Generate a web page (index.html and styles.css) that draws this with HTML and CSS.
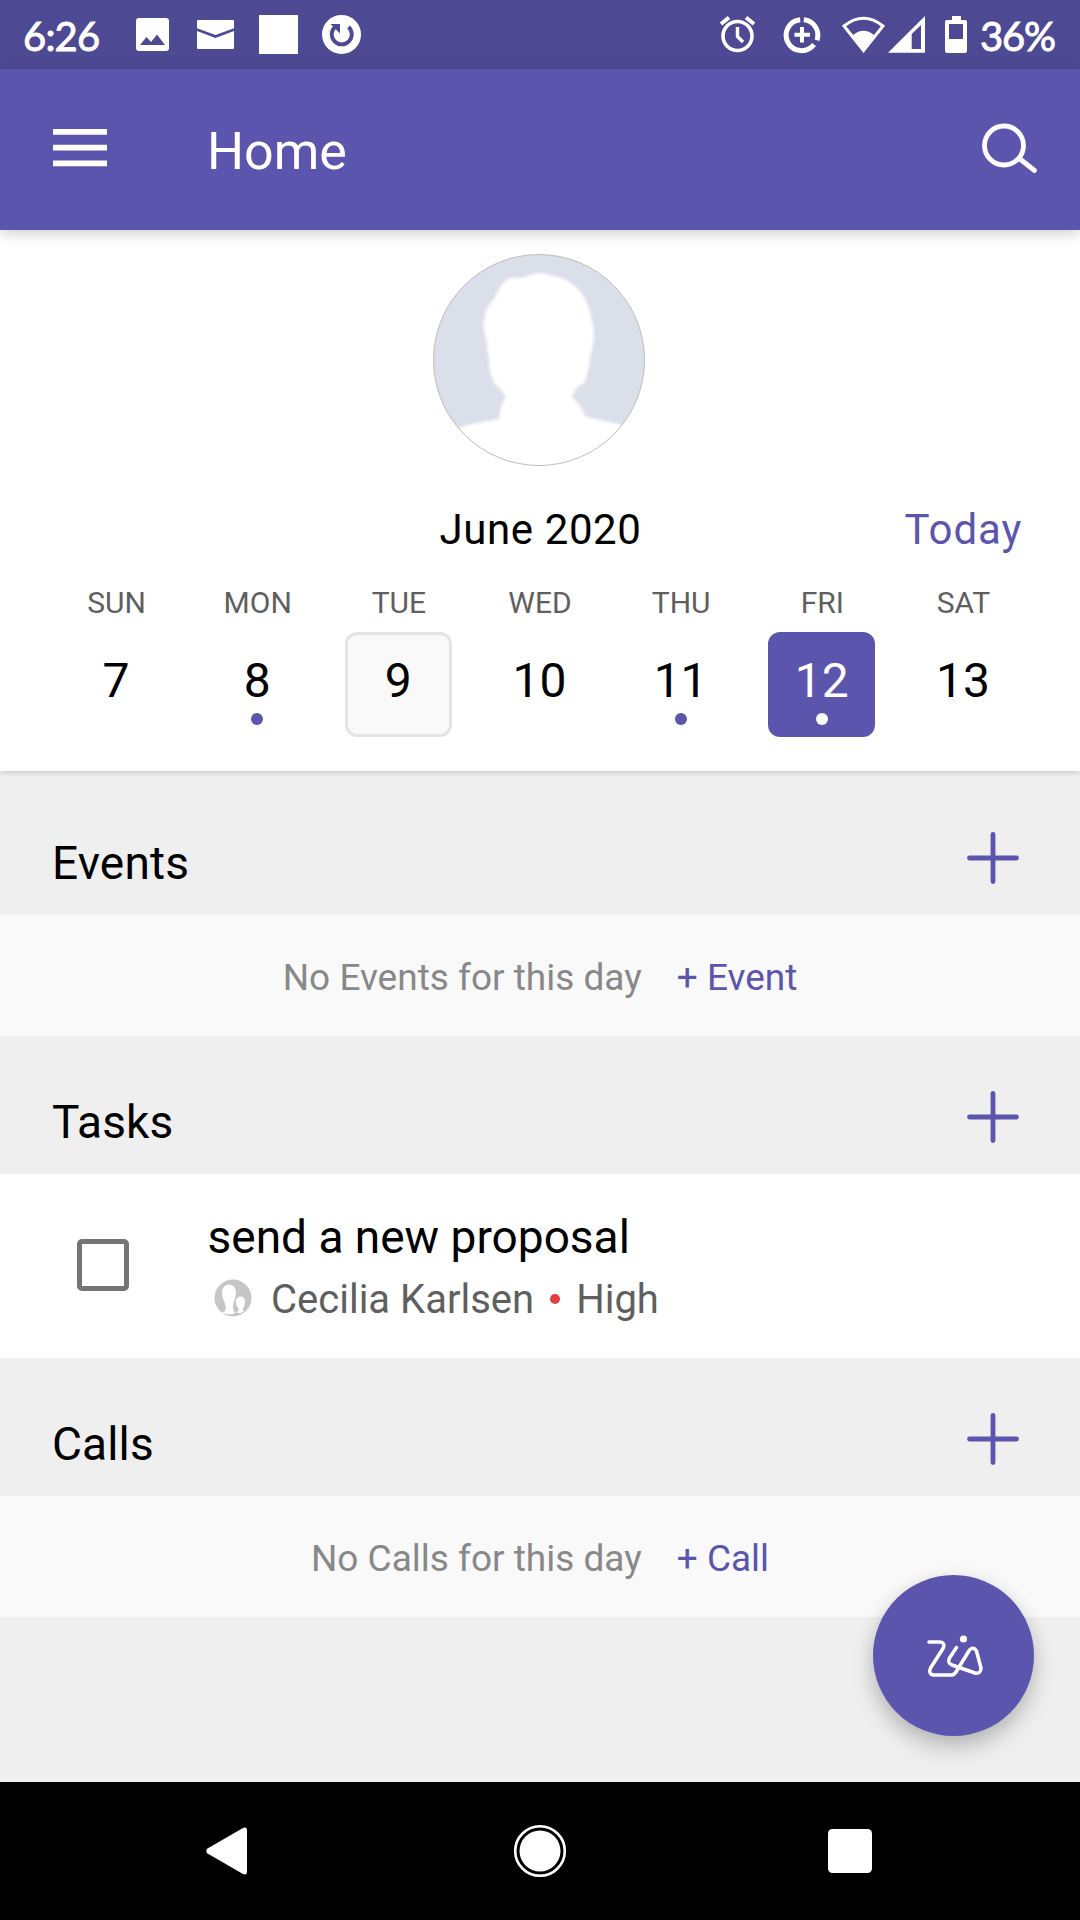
FILE: index.html
```html
<!DOCTYPE html>
<html lang="en">
<head>
  <meta charset="UTF-8">
  <title>Home</title>
  <meta name="viewport" content="width=device-width, initial-scale=1">
  <link rel="stylesheet" href="styles.css">
</head>
<body>
<div class="status-bar">
  <span class="clock">6:26</span>
  <svg class="status-left" width="226" height="40" viewBox="135 14 226 40" fill="#fff">
    <path fill-rule="evenodd" d="M139 18h27q3 0 3 3v27q0 3-3 3h-27q-3 0-3-3V21q0-3 3-3zM140 45h25l-8-10.500-6 7.500-4.500-5z"/>
    <path d="M198 20h35q1 0 1 1v7.300l-18.500 6.700L197 28.300V21q0-1 1-1zM197 31l18.500 7L234 31v17q0 1-1 1h-35q-1 0-1-1z"/>
    <path d="M259 15h39v39h-39z"/>
    <circle cx="341.500" cy="34.500" r="19.500"/>
    <path d="M348.500 27a10 10 0 1 1-13.500 0" fill="none" stroke="#4e4993" stroke-width="3.800"/>
    <path d="M330.500 24h9.500v9.500z" fill="#4e4993"/>
  </svg>
  <svg class="status-right" width="248" height="40" viewBox="719 14 248 40" fill="none" stroke="#fff">
    <circle cx="737.500" cy="36" r="14.500" stroke-width="3.600"/>
    <path d="M737.500 27v9.500l5.500 5.500" stroke-width="3.400"/>
    <path d="M721 24l8-6.500M754 24l-8-6.500" stroke-width="4"/>
    <path d="M803.800 19.700a15.500 15.500 0 0 1 13.200 20.500M814 44.500a15.500 15.500 0 1 1-13.800-24.800" stroke-width="5"/>
    <path d="M802 27v15.500M794.500 34.800H810" stroke-width="4"/>
    <path d="M844 26q19.500-15.500 39 0l-19.500 24.500z" stroke-width="3"/>
    <path d="M853 35q10.500-8.500 21 0l-10.500 16z" fill="#fff" stroke="none"/>
    <path d="M925 16v36.700h-37z" fill="#fff" stroke="none"/>
    <path d="M921 25v24h-9.300V34z" fill="#4e4993" stroke="none"/>
    <path fill-rule="evenodd" d="M952 16h9v4h4q2 0 2 2v29q0 2-2 2h-18q-2 0-2-2V22q0-2 2-2h5zM949 24v15h14V24z" fill="#fff" stroke="none"/>
  </svg>
  <span class="battery">36%</span>
</div>

<div class="app-bar">
  <svg class="menu-icon" width="54" height="38" viewBox="0 0 54 38" fill="#fff">
    <path d="M0 0h54v5.700H0zM0 15.800h54v5.700H0zM0 31.600h54v5.700H0z"/>
  </svg>
  <h1>Home</h1>
  <svg class="search-icon" width="56" height="52" viewBox="0 0 56 52" fill="none" stroke="#fff" stroke-width="4.800" stroke-linecap="round">
    <circle cx="22" cy="23.500" r="19.500"/>
    <path d="M38 37l14.500 11.500"/>
  </svg>
</div>

<div class="calendar">
  <svg class="avatar" width="212" height="212" viewBox="0 0 212 212">
    <defs>
      <clipPath id="round"><circle cx="106" cy="106" r="105.500"/></clipPath>
      <filter id="soft"><feGaussianBlur stdDeviation="1.500"/></filter>
    </defs>
    <circle cx="106" cy="106" r="105.500" fill="#dbdfe9"/>
    <g clip-path="url(#round)">
      <path filter="url(#soft)" fill="#fff" d="M20 220V177Q32 171 42 169.500L66 165Q67 152 72.500 143Q69 136 62 130Q56 120 56 105Q54 96 53 84Q49 72 51 66Q53 52 61 45Q68 28 77 24Q86 25 94 22Q106 16 119 22Q130 23 138 29Q150 37 155 52Q160 66 161 82Q160 94 157 105Q156 117 151 129Q143 131 139 143Q148 151 153 163L176 168L190 171L212 190V220Z"/>
    </g>
    <circle cx="106" cy="106" r="105.500" fill="none" stroke="#bdbdbd"/>
  </svg>
  <div class="month-row">
    <span class="month">June 2020</span>
    <a class="today">Today</a>
  </div>
  <div class="week">
    <div class="day"><span class="name">SUN</span><span class="num">7</span></div>
    <div class="day"><span class="name">MON</span><span class="num dot">8</span></div>
    <div class="day"><span class="name">TUE</span><span class="num current">9</span></div>
    <div class="day"><span class="name">WED</span><span class="num">10</span></div>
    <div class="day"><span class="name">THU</span><span class="num dot">11</span></div>
    <div class="day"><span class="name">FRI</span><span class="num dot selected">12</span></div>
    <div class="day"><span class="name">SAT</span><span class="num">13</span></div>
  </div>
</div>

<div class="section-head first">
  <h2>Events</h2>
  <svg class="plus" width="54" height="54" viewBox="0 0 54 54"><path d="M27 3.500v47M3.500 27h47"/></svg>
</div>
<div class="empty"><span>No Events for this day</span><a>+ Event</a></div>

<div class="section-head">
  <h2>Tasks</h2>
  <svg class="plus" width="54" height="54" viewBox="0 0 54 54"><path d="M27 3.500v47M3.500 27h47"/></svg>
</div>
<div class="task">
  <span class="checkbox"></span>
  <div class="task-body">
    <div class="task-title">send a new proposal</div>
    <div class="task-meta">
      <svg class="owner-icon" width="38" height="38" viewBox="0 0 38 38">
        <circle cx="19" cy="19" r="18.500" fill="#c6c6c6"/>
        <path fill="#fff" d="M8 33.500c3-1 4.500-2.500 3.500-6.500-.5-4-3.500-8-3.500-13 0-5.500 3-8.500 7-8.500s7 3 7 8.500c0 5-2.500 9-3 13-.3 3.500 1 6 2.500 7-4 2-9.500 1.500-13.500-.5z"/>
        <path fill="#fff" d="M22.500 33.500c1.500-.8 2.500-1.800 2-4-1.500-2-2.500-4-2.500-6.500 0-3.500 2-5.500 4.500-5.500s4.500 2 4.500 5.500c0 2.500-1 4.500-2 6.500-.3 1.500 0 2.500 1 3-2 1.500-5 2-7.500 1z"/>
      </svg>
      <span class="owner">Cecilia Karlsen</span>
      <i class="priority-dot"></i>
      <span>High</span>
    </div>
  </div>
</div>

<div class="section-head">
  <h2>Calls</h2>
  <svg class="plus" width="54" height="54" viewBox="0 0 54 54"><path d="M27 3.500v47M3.500 27h47"/></svg>
</div>
<div class="empty"><span>No Calls for this day</span><a>+ Call</a></div>

<div class="fab">
  <svg width="60" height="46" viewBox="0 0 60 46" fill="none" stroke="#fff" stroke-width="3.500" stroke-linecap="round" stroke-linejoin="round">
    <path d="M4 9h11q6 1 3 6.500L5.500 35q-2.500 6 3 7H27q2.500-.5 4-3L44.500 17q4-4 7 1l4.500 17q0 6-6 5L27 32q-5-2-2.500-7L31.500 14.500"/>
    <circle cx="38.500" cy="6" r="3.600" fill="#fff" stroke="none"/>
  </svg>
</div>

<div class="nav-bar">
  <svg width="42" height="48" viewBox="0 0 42 48" fill="#fff"><path d="M1.500 21.500L37 1q4-1.500 4 2.500v41q0 4-4 2.500L1.500 26.500q-2.500-2.500 0-5z"/></svg>
  <svg class="nav-home" width="54" height="54" viewBox="0 0 54 54"><circle cx="27" cy="27" r="24.800" fill="none" stroke="#fff" stroke-width="2.600"/><circle cx="27" cy="27" r="20.500" fill="#fff"/></svg>
  <svg width="44" height="44" viewBox="0 0 44 44"><rect width="44" height="44" rx="4.500" fill="#fff"/></svg>
</div>
</body>
</html>
```
FILE: styles.css
```css
* { box-sizing: border-box; }
body { margin: 0; width: 1080px; height: 1920px; overflow: hidden; display: flex; flex-direction: column; position: relative; background: #efefef; color: #000; font-family: Roboto, sans-serif; }
body > div { flex-shrink: 0; }
svg { display: block; flex-shrink: 0; }
h1, h2 { margin: 0; font-weight: 400; }

.status-bar { height: 69px; background: #4e4993; color: #fff; display: flex; align-items: flex-start; padding: 0 23px; font-family: Lato, sans-serif; font-size: 40px; line-height: 73px; -webkit-text-stroke: 0.9px #fff; }
.status-left, .status-right { margin-top: 14px; }
.clock { width: 112px; letter-spacing: -0.8px; }
.status-right { margin-left: 358px; }
.battery { margin-left: 13px; letter-spacing: -1.2px; white-space: nowrap; }

.app-bar { height: 161px; background: #5c55ae; color: #fff; display: flex; align-items: center; padding: 0 42px 0 53px; box-shadow: 0 3px 14px rgba(0, 0, 0, 0.2); z-index: 1; }
.menu-icon { margin-top: -3px; }
.app-bar h1 { font-size: 52px; line-height: 80px; margin: 5px 0 0 100px; }
.search-icon { margin: -4px 0 0 auto; }

.calendar { height: 541px; background: #fff; padding: 24px 46.5px 0 45.5px; box-shadow: 0 1px 6px rgba(0, 0, 0, 0.2); }
.avatar { margin-left: 387.5px; }
.month-row { display: grid; grid-template-columns: 1fr auto 1fr; margin-top: 34px; font-size: 42px; line-height: 60px; letter-spacing: 0.6px; }
.month { grid-column: 2; margin-left: 2px; }
.today { color: #5c55ae; text-align: right; padding-right: 11px; letter-spacing: 1px; }
.week { display: grid; grid-template-columns: repeat(7, 1fr); margin-top: 23px; }
.day { display: flex; flex-direction: column; align-items: center; }
.name { font-size: 30px; line-height: 40px; padding-left: 1px; color: #5f5f5f; }
.num { width: 107px; height: 105px; margin-top: 9px; border-radius: 12px; font-size: 48px; line-height: 97px; text-align: center; }
.dot::after { content: ""; display: block; width: 12px; height: 12px; margin: -16px auto 0; border-radius: 50%; background: #5c55ae; }
.current { background: #f9f9f9; border: 3px solid #e4e4e4; line-height: 91px; }
.selected { background: #5c55ae; color: #fff; }
.selected::after { background: #fff; }

.section-head { height: 138px; display: flex; align-items: flex-end; justify-content: space-between; padding: 0 60px 0 52px; }
.first { height: 144px; }
.section-head h2 { font-size: 46px; line-height: 72px; margin-bottom: 16px; letter-spacing: 0.15px; }
.plus { margin-bottom: 30px; fill: none; stroke: #5c55ae; stroke-width: 4.8px; stroke-linecap: round; }
.empty { height: 121px; background: #f9f9f9; display: flex; justify-content: center; gap: 35px; padding-top: 4px; font-size: 37px; line-height: 117px; color: #888; }
.empty a { color: #5c55ae; }

.task { height: 184px; background: #fff; display: flex; padding-left: 77px; }
.checkbox { width: 52px; height: 52px; margin-top: 65px; border: 5.5px solid #757575; border-radius: 5px; }
.task-body { margin-left: 78.5px; padding-top: 33px; }
.task-title { font-size: 46px; line-height: 60px; }
.task-meta { display: flex; align-items: center; margin-top: 5px; padding-left: 6px; font-size: 40px; line-height: 56px; color: #5f5f5f; }
.owner-icon { margin-top: -5px; }
.owner { margin-left: 19.5px; }
.priority-dot { width: 10px; height: 10px; margin: -2px 16px 0 16px; border-radius: 50%; background: #e53e3e; }

.fab { position: absolute; left: 873px; top: 1575px; width: 161px; height: 161px; border-radius: 50%; background: #5c55ae; box-shadow: 0 12px 22px rgba(0, 0, 0, 0.2), 0 2px 18px rgba(0, 0, 0, 0.07); }
.fab svg { margin: 57.5px 0 0 52px; }

.nav-bar { height: 138px; margin-top: auto; background: #000; display: grid; grid-template-columns: 1fr auto 1fr; align-items: center; padding: 0 208.5px 0 206px; }
.nav-bar svg:last-child { margin-left: auto; }
.nav-home { margin-left: 2.5px; }
```
